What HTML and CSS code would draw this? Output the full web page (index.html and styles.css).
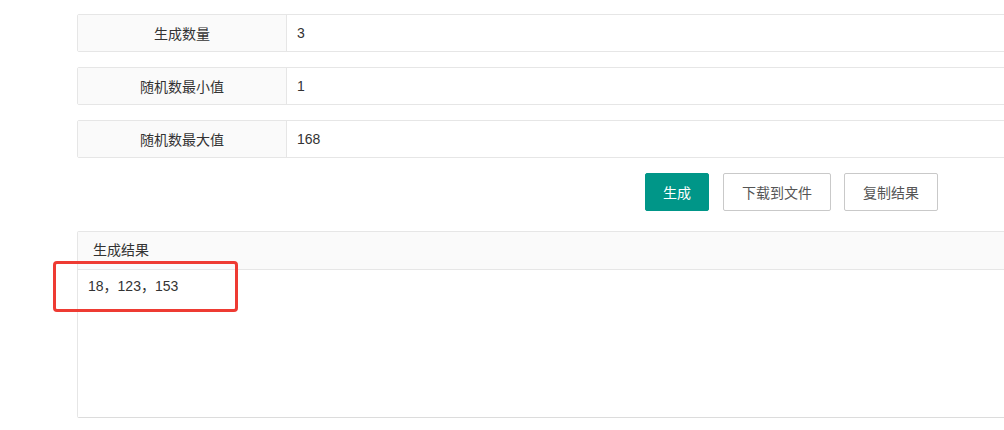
FILE: index.html
```html
<!DOCTYPE html>
<html lang="zh-CN">
<head>
  <meta charset="UTF-8">
  <title>随机数生成</title>
  <link rel="stylesheet" href="styles.css">
</head>
<body>

<div class="page">
  <div class="form-row">
    <label class="form-label">生成数量</label>
    <input class="form-input" type="text" value="3">
  </div>
  <div class="form-row">
    <label class="form-label">随机数最小值</label>
    <input class="form-input" type="text" value="1">
  </div>
  <div class="form-row">
    <label class="form-label">随机数最大值</label>
    <input class="form-input" type="text" value="168">
  </div>

  <div class="btn-group">
    <button class="btn btn-primary" type="button">生成</button>
    <button class="btn" type="button">下载到文件</button>
    <button class="btn" type="button">复制结果</button>
  </div>

  <div class="card">
    <div class="card-header">生成结果</div>
    <textarea class="card-body">18，123，153</textarea>
  </div>

  <div class="highlight"></div>
</div>

</body>
</html>
```

FILE: styles.css
```css
body {
  margin: 0;
  font-family: "Liberation Sans", "Noto Sans CJK SC", sans-serif;
  font-size: 14px;
  color: #333;
  overflow: hidden;
}
.page {
  position: relative;
  width: 1100px;
  padding: 14px 0 0 77px;
}
.form-row {
  display: flex;
  height: 38px;
  margin-bottom: 15px;
  border: 1px solid #e6e6e6;
  border-radius: 2px;
  box-sizing: border-box;
}
.form-label {
  width: 209px;
  flex: none;
  display: flex;
  align-items: center;
  justify-content: center;
  padding-bottom: 1px;
  box-sizing: border-box;
  background: #fafafa;
  border-right: 1px solid #e6e6e6;
}
.form-input {
  flex: 1;
  border: none;
  outline: none;
  padding: 0 10px;
  font-family: inherit;
  font-size: 14px;
  color: #333;
  background: #fff;
}
.btn-group {
  display: flex;
  gap: 14px;
  margin-left: 568px;
  margin-bottom: 20px;
}
.btn {
  height: 38px;
  padding: 0 18px;
  border: 1px solid #c9c9c9;
  border-radius: 2px;
  background: #fff;
  color: #555;
  font-family: inherit;
  font-size: 14px;
  cursor: pointer;
}
.btn + .btn + .btn {
  margin-left: -1px;
}
.btn-primary {
  background: #009688;
  border-color: #009688;
  color: #fff;
  width: 64px;
  padding: 0;
}
.card {
  border: 1px solid #e6e6e6;
  border-bottom-color: #dcdcdc;
  border-radius: 2px;
  height: 187px;
  display: flex;
  flex-direction: column;
  box-sizing: border-box;
}
.card-header {
  height: 37px;
  line-height: 36px;
  padding-left: 15px;
  background: #fafafa;
  border-bottom: 1px solid #e6e6e6;
  color: #333;
}
.card-body {
  flex: 1;
  border: none;
  outline: none;
  resize: none;
  padding: 5px 10px;
  font-family: inherit;
  font-size: 14px;
  color: #333;
  background: #fff;
}
.highlight {
  position: absolute;
  left: 53px;
  top: 261px;
  width: 179px;
  height: 45px;
  border: 3px solid #ee3b33;
  border-radius: 4px;
}
```
